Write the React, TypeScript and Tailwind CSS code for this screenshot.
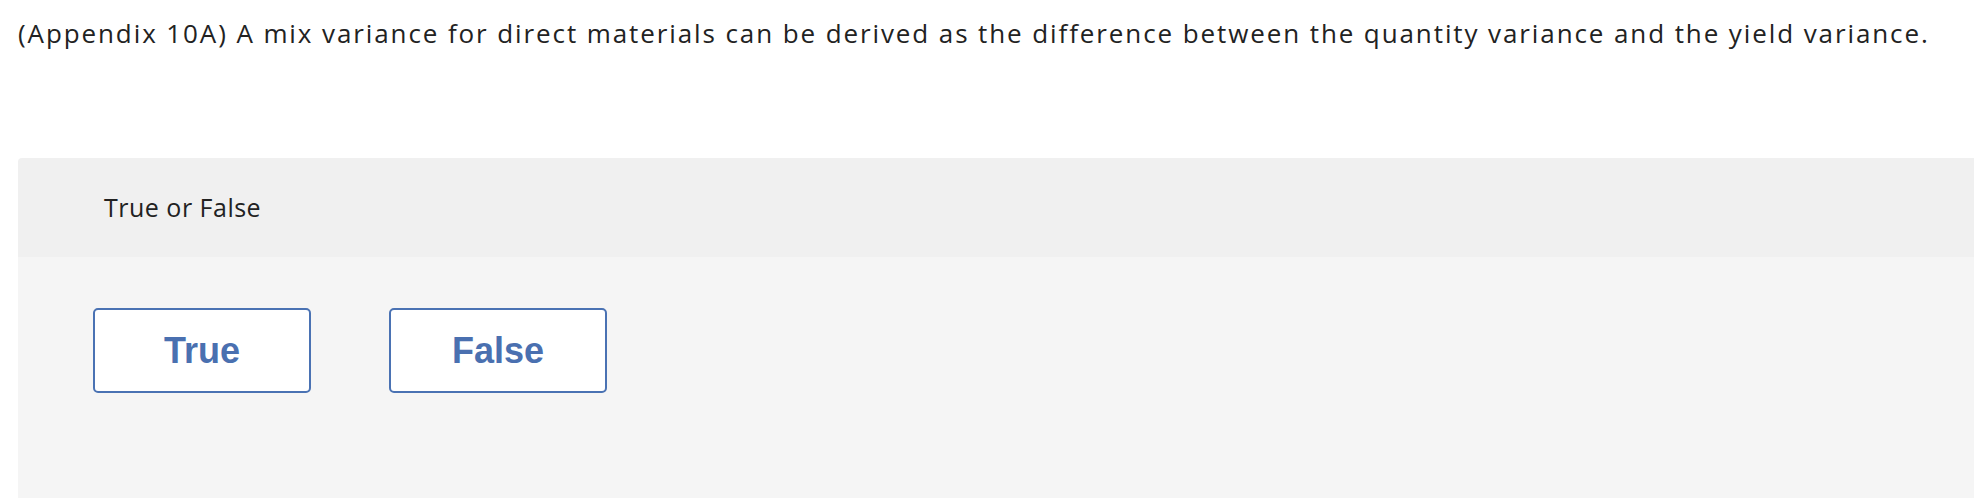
import React, { useState } from 'react';

const choices = ['True', 'False'];

const App = () => {
  const [selected, setSelected] = useState<string | null>(null);

  return (
    <div className="min-h-screen bg-white font-['Open_Sans',Arial,sans-serif] text-[#222222]">
      {/* Question prompt */}
      <p className="pl-[18px] pt-[18px] text-[26px] leading-[30px] tracking-[1.9px]">
        (Appendix 10A) A mix variance for direct materials can be derived as the difference between the quantity variance and the yield variance.
      </p>

      {/* Answer panel */}
      <div className="ml-[18px] mt-[110px] overflow-hidden rounded-tl-[4px]">
        <div className="flex h-[99px] items-center bg-[#f0f0f0] pl-[86px] text-[25px] tracking-[0.5px]">
          True or False
        </div>
        <div className="flex gap-[78px] bg-[#f5f5f5] pl-[75px] pt-[51px] pb-[120px]">
          {choices.map((choice) => (
            <button
              key={choice}
              onClick={() => setSelected(choice)}
              className={`flex h-[85px] w-[218px] items-center justify-center rounded-[5px] border-2 border-[#4a72b3] font-['Liberation_Sans',Arial,sans-serif] text-[36px] font-bold text-[#4a70b0] ${
                selected === choice ? 'bg-[#eef3fb]' : 'bg-white'
              }`}
            >
              {choice}
            </button>
          ))}
        </div>
      </div>
    </div>
  );
};

export default App;
